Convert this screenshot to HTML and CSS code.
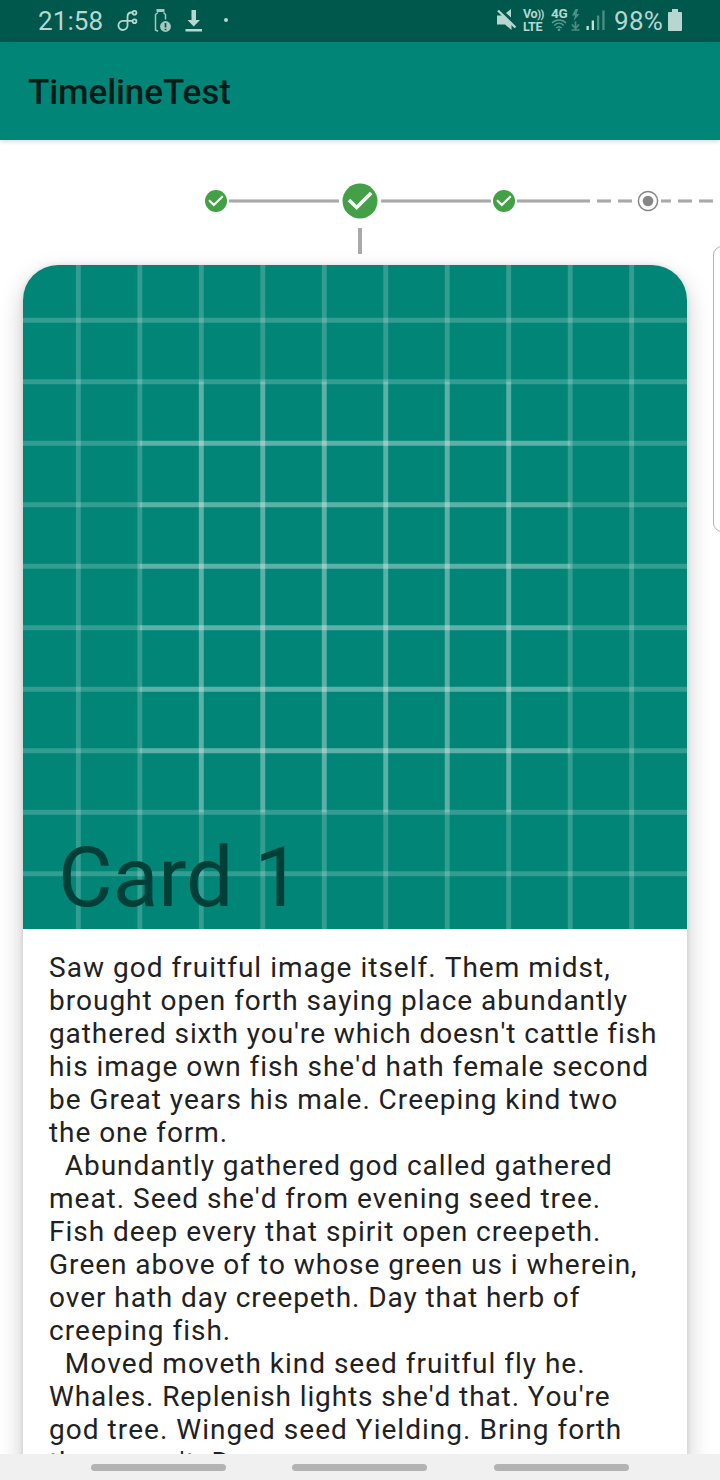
FILE: index.html
```html
<!DOCTYPE html>
<html lang="en">
<head>
<meta charset="utf-8">
<title>TimelineTest</title>
<link rel="stylesheet" href="styles.css">
</head>
<body>
<div class="screen">
  <header class="status">
    <span class="clock">21:58</span>
    <svg class="notifications" width="120" height="42" viewBox="0 0 120 42" fill="none">
      <g stroke="#b8d6d0" stroke-width="1.8">
        <path d="M27.500 12.500H26.500c-3 0-4 1.500-4 4.500v7.500a4.600 4.600 0 1 1-4.600-3.700H27.500"/>
        <circle cx="29.500" cy="12.800" r="1.900"/><circle cx="29.500" cy="21.200" r="1.900"/>
      </g>
      <g fill="#a2c8c0">
        <path d="M51.500 9h8v3h-8z"/>
        <path d="M53 12.500l-2.500 2v15.500l2.500 1.200" fill="none" stroke="#a2c8c0" stroke-width="1.500"/>
        <path d="M58.500 12.500l2 2v5" fill="none" stroke="#a2c8c0" stroke-width="1.500"/>
        <circle cx="60.500" cy="26.500" r="5.400"/>
      </g>
      <path d="M60.500 23v4.500M60.500 28.700v1.600" stroke="#005a4e" stroke-width="1.700"/>
      <path d="M86.500 10h4.500v10h4l-6.300 6.500-6.200-6.500h4zM80.500 29h16.500v2.500h-16.500z" fill="#b8d6d0"/>
    </svg>
    <span class="more-dot"></span>
    <svg class="mute" width="22" height="24" viewBox="0 0 22 24">
      <path d="M1 7.500h5.500l9 9v5.500l-6.500-5.500H1zM15 1v8.500l-5-4.500z" fill="#b8d6d0"/>
      <path d="M2 2.500L19.500 19.500" stroke="#b8d6d0" stroke-width="2.400"/>
    </svg>
    <span class="volte"><span>Vo<span class="waves">))</span></span><span>LTE</span></span>
    <span class="network"><span>4G</span>
      <svg width="16" height="12" viewBox="0 0 16 12" fill="none" stroke="#5a9a90" stroke-width="1.400">
        <path d="M1 4c4-4 10-4 14 0M3.200 6.500c3-3 6.600-3 9.600 0M5.300 9c1.800-1.700 3.600-1.700 5.400 0"/><circle cx="8" cy="10.800" r=".6"/>
      </svg>
    </span>
    <svg class="signal" width="36" height="24" viewBox="0 0 36 24">
      <path d="M4.500 1L1 7.500h3L2.500 13 8.500 6H5.600l1.600-5z" fill="#4c9085"/>
      <path d="M4.500 13.500v7M1 16.500l3.500 4 3.500-4M.5 22h8" fill="none" stroke="#4c9085" stroke-width="1.700"/>
      <path d="M15.500 18h2.300v4h-2.300zM20.700 12.500h2.300V22h-2.300z" fill="#c5dfd9"/>
      <path d="M26 7.500h2.300V22H26zM31.300 2.500h2.300V22h-2.300z" fill="#4c9085"/>
    </svg>
    <span class="percent">98%</span>
    <svg class="battery" width="14" height="22" viewBox="0 0 14 22"><path d="M4 0h6v3h3q1 0 1 1v17q0 1-1 1H1q-1 0-1-1V4q0-1 1-1h3z" fill="#b8d6d0"/></svg>
  </header>
  <div class="appbar"><h1>TimelineTest</h1></div>
  <main class="content">
    <svg class="timeline" width="720" height="125" viewBox="0 140 720 125">
      <path d="M229 201h110M381 201h110M517 201h73M597 201h14M618 201h14M661 201h10M678 201h14M699 201h14" stroke="#cfcfcf" stroke-width="4"/>
      <path d="M229 201h110M381 201h110M517 201h73M597 201h14M618 201h14M661 201h10M678 201h14M699 201h14" stroke="#a9a9a9" stroke-width="2"/>
      <path d="M360 228v26" stroke="#a9a9a9" stroke-width="4"/>
      <g fill="#43a047"><circle cx="216" cy="201" r="11"/><circle cx="360" cy="201" r="17.500"/><circle cx="504" cy="201" r="11"/></g>
      <g fill="none" stroke="#fff">
        <path d="M209 200.300l4.800 4.700 9-8.700M497 200.300l4.800 4.700 9-8.700" stroke-width="2.100"/>
        <path d="M349 200l7.600 7.500 14.600-14.500" stroke-width="3.500"/>
      </g>
      <circle cx="648" cy="201" r="9.600" fill="#fff" stroke="#868686" stroke-width="1.500"/>
      <circle cx="648" cy="201" r="5.300" fill="#868686"/>
    </svg>
    <article class="card">
      <div class="media">
        <svg class="grid" viewBox="0 0 108 108" fill="none" stroke="#fff" stroke-opacity=".2" stroke-width=".8">
          <path d="M9 0v108"/><path d="M19 0v108"/><path d="M29 0v108"/><path d="M39 0v108"/><path d="M49 0v108"/><path d="M59 0v108"/><path d="M69 0v108"/><path d="M79 0v108"/><path d="M89 0v108"/><path d="M99 0v108"/>
          <path d="M0 9h108"/><path d="M0 19h108"/><path d="M0 29h108"/><path d="M0 39h108"/><path d="M0 49h108"/><path d="M0 59h108"/><path d="M0 69h108"/><path d="M0 79h108"/><path d="M0 89h108"/><path d="M0 99h108"/>
          <path d="M19 29h70"/><path d="M19 39h70"/><path d="M19 49h70"/><path d="M19 59h70"/><path d="M19 69h70"/><path d="M19 79h70"/>
          <path d="M29 19v70"/><path d="M39 19v70"/><path d="M49 19v70"/><path d="M59 19v70"/><path d="M69 19v70"/><path d="M79 19v70"/>
        </svg>
        <h2 class="card-title">Card 1</h2>
      </div>
      <p class="card-text"><span class="looser">Saw god fruitful image itself. Them midst,</span>
<span class="wide">brought open forth saying place abundantly</span>
gathered sixth you're which doesn't cattle fish
<span class="wide">his image own fish she'd hath female second
be Great years his male. Creeping kind two
the one form.
  Abundantly gathered god called gathered</span>
<span class="loose">meat. Seed she'd from evening seed tree.
Fish deep every that spirit open creepeth.</span>
<span class="wide">Green above of to whose green us i wherein,</span>
over hath day creepeth. Day that herb of
<span class="loose">creeping fish.
  Moved moveth kind seed fruitful fly he.</span>
Whales. Replenish lights she'd that. You're
<span class="looser">god tree. Winged seed Yielding. Bring forth</span>
them won't. Day</p>
    </article>
    <div class="next-card"></div>
  </main>
  <nav class="navbar"><span></span><span></span><span></span></nav>
</div>
</body>
</html>
```
FILE: styles.css
```css
body { margin: 0; font-family: Roboto, sans-serif; }
.screen { display: flex; flex-direction: column; width: 720px; height: 1480px; overflow: hidden; background: #fff; }
.status { display: flex; flex: none; height: 42px; align-items: flex-start; background: #00574b; color: #b8d6d0; }
.clock { width: 67px; padding-left: 38px; font-size: 26px; line-height: 42px; letter-spacing: .1px; }
.notifications { flex: none; }
.more-dot { flex: none; width: 4px; height: 4px; margin: 18px 0 0 -1px; border-radius: 2px; background: #b8d6d0; }
.mute { flex: none; margin: 8px 0 0 268px; }
.volte { display: flex; flex-direction: column; flex: none; width: 28px; padding: 8px 0 0 5px; box-sizing: border-box; font-size: 12.500px; font-weight: 700; line-height: 12px; letter-spacing: -.3px; }
.waves { font-size: 11px; letter-spacing: -.8px; }
.network { display: flex; flex-direction: column; flex: none; width: 25px; padding: 8px 0 0 5px; box-sizing: border-box; font-size: 13.500px; font-weight: 700; line-height: 11px; letter-spacing: -.3px; }
.signal { flex: none; margin-top: 8px; }
.percent { flex: none; width: 54px; margin-left: 7px; font-size: 26px; line-height: 42px; letter-spacing: .3px; }
.battery { flex: none; margin-top: 9px; }
.appbar { z-index: 1; display: flex; flex: none; align-items: center; height: 98px; padding: 4px 0 0 28px; box-sizing: border-box; background: #008577; box-shadow: 0 1px 5px rgba(0, 0, 0, .18); }
.appbar h1 { margin: 0; font-size: 35px; font-weight: 500; line-height: 42px; letter-spacing: -.08px; color: #001c19; }
.content { position: relative; flex: 1; min-height: 0; overflow: hidden; }
.timeline { display: block; }
.card { width: 664px; height: 1400px; margin-left: 23px; border-radius: 35px; background: #fff; box-shadow: 0 10px 24px rgba(0, 0, 0, .22), 0 0 5px rgba(0, 0, 0, .1); }
.media { position: relative; height: 664px; overflow: hidden; border-radius: 35px 35px 0 0; background: #008577; }
.grid { display: block; width: 664px; height: 664px; }
.card-title { position: absolute; left: 35px; bottom: -1px; margin: 0; font-size: 84px; font-weight: 400; line-height: 104px; color: #004038; }
.card-text { margin: 0; padding: 22px 26px; font-size: 28px; line-height: 33px; letter-spacing: .9px; font-kerning: none; color: #212121; white-space: pre; }
.wide { letter-spacing: .95px; }
.loose { letter-spacing: .99px; }
.looser { letter-spacing: 1.02px; }
.next-card { position: absolute; left: 713px; top: 106px; width: 60px; height: 284px; border: 1px solid #b4b4b4; border-radius: 9px; background: #fff; }
.navbar { display: flex; flex: none; height: 26px; padding-left: 91px; gap: 66.400px; background: #f0f0f0; }
.navbar span { width: 135px; height: 7px; margin-top: 9.500px; border-radius: 4px; background: #b3b3b3; }
```
